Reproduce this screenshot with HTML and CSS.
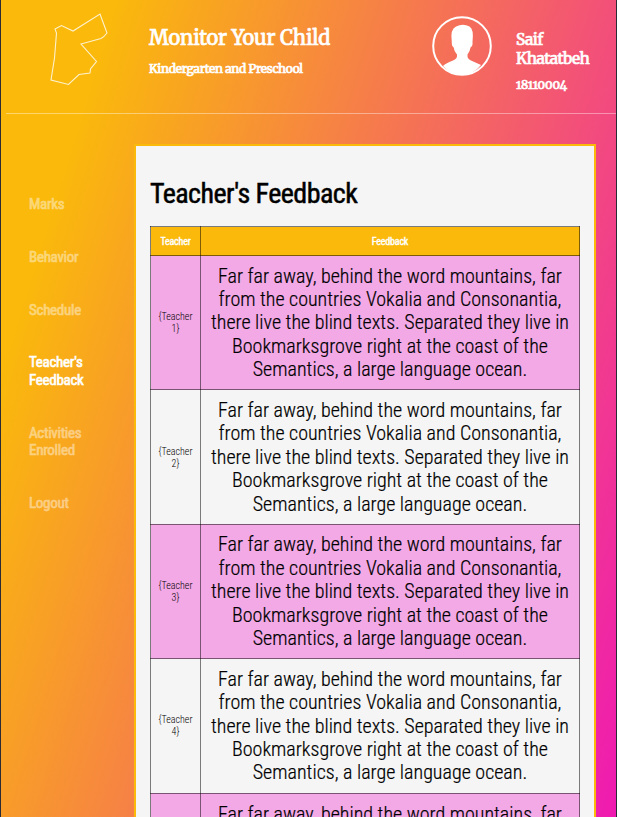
FILE: index.html
```html
<!DOCTYPE html>
<html lang="en">
<head>
<meta charset="utf-8">
<title>Monitor Your Child</title>
<link rel="stylesheet" href="styles.css">
</head>
<body>
<div class="page">
  <header class="header">
    <svg class="map" width="60" height="76" viewBox="0 0 60 76"><path d="M5 16 L11.500 12.500 L23 18 L50 1 L57 20 Q54 24 51 25.500 L31 31 L46.500 48.500 L40.500 56 L40 60 L29 61.500 L18.500 71.500 L1 67 L4.500 45 L6.500 20 Z"/></svg>
    <div class="brand">
      <h1>Monitor Your Child</h1>
      <p>Kindergarten and Preschool</p>
    </div>
    <svg class="avatar" width="60" height="60" viewBox="0 0 60 60"><circle cx="30" cy="30" r="28.800"/><path d="M11 50 Q13 47.500 21 44.500 Q25.500 43 25 38.500 Q22 35.500 21.700 31.500 Q19.500 30 19.800 26 Q18 13 24 10.500 Q31 7 37.500 10.500 Q42 13 40.500 26 Q41 30 38.500 31.500 Q38 35.500 35.500 38.500 Q35 43 39 44.500 L49 49 Q41 59 30 59 Q19 59 11 50Z"/></svg>
    <div class="user">
      <h2>Saif<br>Khatatbeh</h2>
      <p>18110004</p>
    </div>
  </header>
  <div class="body">
    <nav class="nav">
      <a>Marks</a>
      <a>Behavior</a>
      <a>Schedule</a>
      <a class="active">Teacher's<br>Feedback</a>
      <a>Activities<br>Enrolled</a>
      <a>Logout</a>
    </nav>
    <main class="panel">
      <h2 class="title">Teacher's Feedback</h2>
      <table>
        <thead><tr><th>Teacher</th><th>Feedback</th></tr></thead>
        <tbody>
        <tr><td>{Teacher<br>1}</td><td class="text">Far far away, behind the word mountains, far<br>from the countries Vokalia and Consonantia,<br>there live the blind texts. Separated they live in<br>Bookmarksgrove right at the coast of the<br>Semantics, a large language ocean.</td></tr>
        <tr><td>{Teacher<br>2}</td><td class="text">Far far away, behind the word mountains, far<br>from the countries Vokalia and Consonantia,<br>there live the blind texts. Separated they live in<br>Bookmarksgrove right at the coast of the<br>Semantics, a large language ocean.</td></tr>
        <tr><td>{Teacher<br>3}</td><td class="text">Far far away, behind the word mountains, far<br>from the countries Vokalia and Consonantia,<br>there live the blind texts. Separated they live in<br>Bookmarksgrove right at the coast of the<br>Semantics, a large language ocean.</td></tr>
        <tr><td>{Teacher<br>4}</td><td class="text">Far far away, behind the word mountains, far<br>from the countries Vokalia and Consonantia,<br>there live the blind texts. Separated they live in<br>Bookmarksgrove right at the coast of the<br>Semantics, a large language ocean.</td></tr>
        <tr><td></td><td class="text last">Far far away, behind the word mountains, far</td></tr>
        </tbody>
      </table>
    </main>
  </div>
</div>
</body>
</html>
```

FILE: styles.css
```css
* { box-sizing: border-box; margin: 0; padding: 0; }
body {
  height: 817px;
  overflow: hidden;
  font-family: "Roboto Condensed", Roboto, sans-serif;
  font-stretch: 75%;
}
.page {
  height: 817px;
  overflow: hidden;
  border-left: 1px solid #2b2b35;
  border-right: 1px solid #2b2b35;
  background: linear-gradient(107.2deg, #fab90b 110px, #ef1bb0 824px);
}
.header {
  display: flex;
  height: 114px;
  margin-left: 5px;
  border-bottom: 1px solid rgba(255, 255, 255, .4);
  color: #fff;
  font-family: Merriweather, "Noto Serif", "DejaVu Serif", serif;
  font-weight: 400;
  -webkit-text-stroke: .7px #fff;
}
.map { margin: 13px 0 0 44px; flex: none; }
.map path { fill: none; stroke: rgba(255, 255, 255, .8); stroke-width: 1.1; }
.brand { width: 283px; margin-left: 39px; padding-top: 25px; flex: none; white-space: nowrap; }
.brand h1 { font-size: 20px; font-weight: 400; line-height: 26px; letter-spacing: -.12px; }
.brand p { font-size: 12px; line-height: 16px; margin-top: 10px; letter-spacing: -.28px; }
.avatar { margin-top: 16px; flex: none; }
.avatar circle { fill: none; stroke: #fff; stroke-width: 2; }
.avatar path { fill: #fff; }
.user { margin-left: 24px; padding-top: 30px; white-space: nowrap; }
.user h2 { font-size: 15.5px; font-weight: 400; line-height: 19px; letter-spacing: -.5px; }
.user p { font-size: 12px; line-height: 16px; margin-top: 9px; font-variant-numeric: oldstyle-nums; }
.body { display: flex; align-items: flex-start; }
.nav {
  display: flex;
  flex-direction: column;
  gap: 35.3px;
  width: 133px;
  padding: 82px 0 0 28px;
  flex: none;
  font-size: 15px;
  font-weight: 400;
  line-height: 17.5px;
  letter-spacing: -.28px;
  color: #fff;
  -webkit-text-stroke: .6px #fff;
}
.nav a { opacity: .45; }
.nav .active { opacity: 1; }
.panel {
  width: 462px;
  height: 700px;
  margin-top: 30px;
  padding: 31px 14px 0;
  border: 2px solid #fbb90b;
  background: #f5f5f5;
  flex: none;
}
.title { font-size: 28px; font-weight: 400; line-height: 34px; letter-spacing: -.55px; -webkit-text-stroke: .5px #000; }
table { width: 430px; margin-top: 15px; table-layout: fixed; border-collapse: collapse; }
th, td { border: 1px solid rgba(0, 0, 0, .5); text-align: center; vertical-align: middle; }
th { height: 29px; background: #fab90b; color: #fff; font-size: 10px; font-weight: 400; letter-spacing: -.2px; padding-top: 1px; -webkit-text-stroke: .4px #fff; }
th:first-child { width: 50px; }
td { height: 134.4px; font-size: 10px; font-weight: 300; line-height: 12px; padding-top: 1px; white-space: nowrap; }
tbody tr:nth-child(odd) { background: #f3a9e6; }
td.text { font-size: 20px; line-height: 23.4px; -webkit-text-stroke: .2px #000; }
td.last { vertical-align: top; padding-top: 9px; }
```
